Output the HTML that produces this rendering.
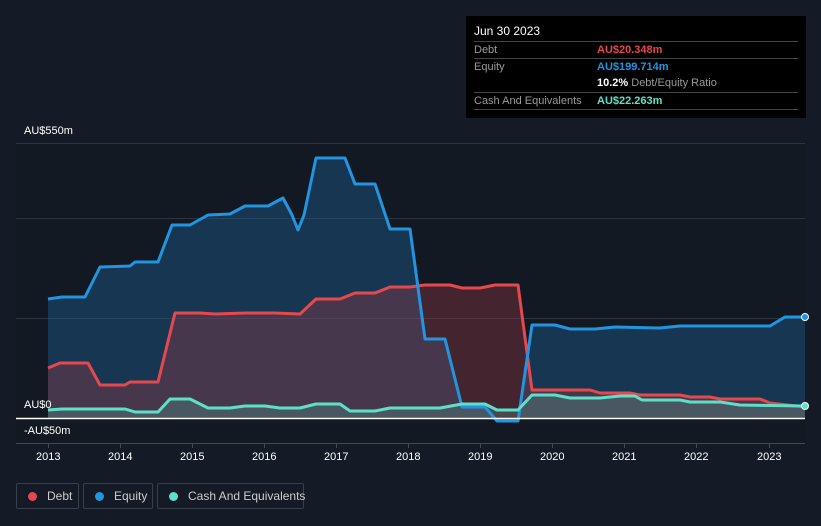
<!DOCTYPE html>
<html><head><style>
body{margin:0;background:#151b26;font-family:"Liberation Sans",sans-serif;}
.w{position:relative;width:821px;height:526px;overflow:hidden;background:#151b26}
.t{position:absolute;left:466px;top:16px;width:340px;height:102px;background:#000;color:#fff;font-size:11px}
.t .r{position:absolute;left:8px;right:8px;border-top:1px solid #444;height:17px;line-height:17px}
.t .l{color:#999;position:absolute;left:0}
.t .v{position:absolute;left:123px;font-weight:bold}
.ax{position:absolute;color:#fff;font-size:11px}
.lg{position:absolute;top:483px;height:26px;border:1px solid #3a404b;border-radius:2px;color:#ccc;font-size:12px;line-height:24px;box-sizing:border-box;white-space:nowrap}
.lg i{display:inline-block;width:9px;height:9px;border-radius:50%;margin:0 10px 0 11px;vertical-align:-1px}
</style></head><body><div class="w">
<svg width="821" height="526" style="position:absolute;left:0;top:0">
<rect x="16" y="143" width="789" height="300" fill="#131922"/>
<g stroke="#2e343e" stroke-width="1">
<line x1="16" y1="143.5" x2="805" y2="143.5"/><line x1="16" y1="218.5" x2="805" y2="218.5"/><line x1="16" y1="318.5" x2="805" y2="318.5"/><line x1="16" y1="443.5" x2="805" y2="443.5" stroke="#444a55"/>
</g>
<g stroke="#444a55"><line x1="48.5" y1="443" x2="48.5" y2="448"/><line x1="120.5" y1="443" x2="120.5" y2="448"/><line x1="192.5" y1="443" x2="192.5" y2="448"/><line x1="264.5" y1="443" x2="264.5" y2="448"/><line x1="336.5" y1="443" x2="336.5" y2="448"/><line x1="408.5" y1="443" x2="408.5" y2="448"/><line x1="480.5" y1="443" x2="480.5" y2="448"/><line x1="552.5" y1="443" x2="552.5" y2="448"/><line x1="624.5" y1="443" x2="624.5" y2="448"/><line x1="696.5" y1="443" x2="696.5" y2="448"/><line x1="769.5" y1="443" x2="769.5" y2="448"/></g>
<path d="M48 299 L62 297 85 297 100 267 130 266 135 262 158 262 172 225 190 225 208 215 230 214 245 206 268 206 283 198 292 215 298 230 304 215 316 158 345 158 355 184 375 184 390 229 410 229 425 339 445 339 462 407 485 407 497 421 518 421 532 325 555 325 570 329 595 329 615 327 660 328 680 326 770 326 785 317 805 317 L805 418 L48 418Z" fill="#1d5a8c" fill-opacity="0.45"/>
<path d="M48 368 L60 363 88 363 100 385 125 385 130 382 158 382 175 313 200 313 215 314 245 313 275 313 300 314 316 299 340 299 355 293 375 293 390 287 410 287 425 285 450 285 462 288 480 288 495 285 518 285 532 390 560 390 590 390 600 393 630 393 640 395 680 395 690 397 710 397 720 399 760 399 770 403 805 407 L805 418 L48 418Z" fill="#a03a48" fill-opacity="0.35"/>
<path d="M48 410 L62 409 125 409 135 412 158 412 170 399 190 399 208 408 230 408 245 406 265 406 280 408 300 408 316 404 340 404 350 411 375 411 390 408 440 408 462 404 485 404 497 410 518 410 532 395 555 395 570 398 600 398 620 396 635 396 642 400 680 400 690 402 720 402 740 405 805 406 L805 418 L48 418Z" fill="#4fb8a8" fill-opacity="0.25"/>
<g fill="none" stroke-width="3" stroke-linejoin="round">
<path d="M48 368 L60 363 88 363 100 385 125 385 130 382 158 382 175 313 200 313 215 314 245 313 275 313 300 314 316 299 340 299 355 293 375 293 390 287 410 287 425 285 450 285 462 288 480 288 495 285 518 285 532 390 560 390 590 390 600 393 630 393 640 395 680 395 690 397 710 397 720 399 760 399 770 403 805 407" stroke="#e5484d"/>
<path d="M48 299 L62 297 85 297 100 267 130 266 135 262 158 262 172 225 190 225 208 215 230 214 245 206 268 206 283 198 292 215 298 230 304 215 316 158 345 158 355 184 375 184 390 229 410 229 425 339 445 339 462 407 485 407 497 421 518 421 532 325 555 325 570 329 595 329 615 327 660 328 680 326 770 326 785 317 805 317" stroke="#2394e0"/>
<path d="M48 410 L62 409 125 409 135 412 158 412 170 399 190 399 208 408 230 408 245 406 265 406 280 408 300 408 316 404 340 404 350 411 375 411 390 408 440 408 462 404 485 404 497 410 518 410 532 395 555 395 570 398 600 398 620 396 635 396 642 400 680 400 690 402 720 402 740 405 805 406" stroke="#5ee0c8"/>
</g>
<line x1="16" y1="418.5" x2="805" y2="418.5" stroke="#fff" stroke-width="1.5"/>
<circle cx="805" cy="317" r="3.5" fill="#2394e0" stroke="#fff" stroke-width="1"/>
<circle cx="805" cy="406" r="3.5" fill="#5ee0c8" stroke="#fff" stroke-width="1"/>
</svg>
<div class="ax" style="left:24px;top:125px">AU$550m</div>
<div class="ax" style="left:24px;top:399px">AU$0</div>
<div class="ax" style="left:24px;top:425px">-AU$50m</div>
<div class="ax" style="top:451px;left:36px">2013</div><div class="ax" style="top:451px;left:108px">2014</div><div class="ax" style="top:451px;left:180px">2015</div><div class="ax" style="top:451px;left:252px">2016</div><div class="ax" style="top:451px;left:324px">2017</div><div class="ax" style="top:451px;left:396px">2018</div><div class="ax" style="top:451px;left:468px">2019</div><div class="ax" style="top:451px;left:540px">2020</div><div class="ax" style="top:451px;left:612px">2021</div><div class="ax" style="top:451px;left:684px">2022</div><div class="ax" style="top:451px;left:757px">2023</div>
<div class="t">
<div style="position:absolute;left:8px;top:8px;font-size:12px">Jun 30 2023</div>
<div class="r" style="top:25px"><span class="l">Debt</span><span class="v" style="color:#e5484d">AU$20.348m</span></div>
<div class="r" style="top:42px"><span class="l">Equity</span><span class="v" style="color:#2394e0">AU$199.714m</span></div>
<div class="r" style="top:59px;border:none"><span class="v">10.2% <span style="color:#999;font-weight:normal">Debt/Equity Ratio</span></span></div>
<div class="r" style="top:76px"><span class="l">Cash And Equivalents</span><span class="v" style="color:#5ee0c8">AU$22.263m</span></div>
<div class="r" style="top:93px;height:0"></div>
</div>
<div class="lg" style="left:16px;width:63px"><i style="background:#e5484d"></i>Debt</div>
<div class="lg" style="left:83px;width:70px"><i style="background:#2394e0"></i>Equity</div>
<div class="lg" style="left:157px;width:147px"><i style="background:#5ee0c8"></i>Cash And Equivalents</div>
</div></body></html>
